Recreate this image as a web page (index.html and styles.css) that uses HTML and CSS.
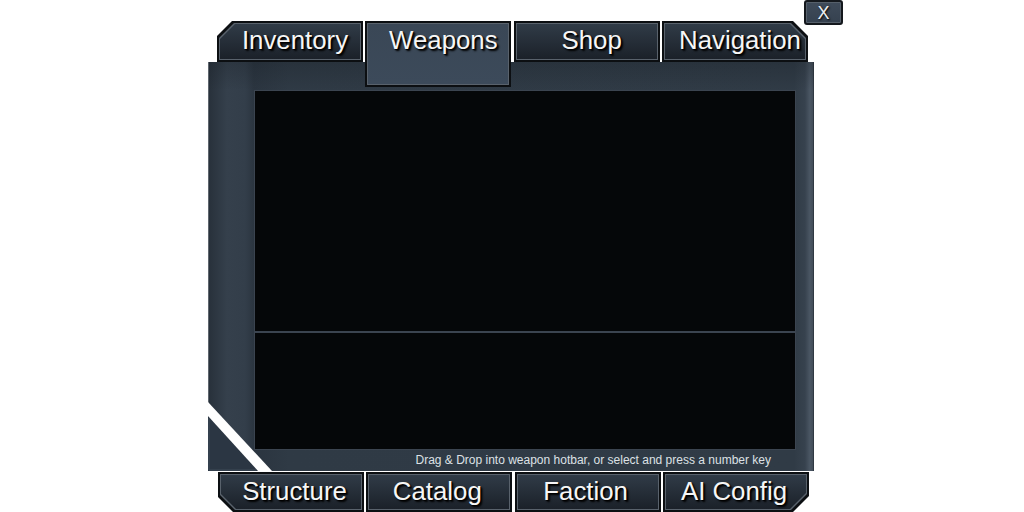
FILE: index.html
```html
<!DOCTYPE html>
<html>
<head>
<meta charset="utf-8">
<link rel="stylesheet" href="styles.css">
</head>
<body>
<div class="window">
  <button class="close"><span>X</span></button>
  <div class="tabs tabs-top">
    <div class="tab cut-tl"><div class="tab-line"><div class="tab-face">Inventory</div></div></div>
    <div class="tab active"><div class="tab-line"><div class="tab-face">Weapons</div></div></div>
    <div class="tab"><div class="tab-line"><div class="tab-face">Shop</div></div></div>
    <div class="tab cut-tr"><div class="tab-line"><div class="tab-face">Navigation</div></div></div>
  </div>
  <div class="panel">
    <div class="screens">
      <div class="screen screen-top"></div>
      <div class="screen screen-bottom"></div>
    </div>
    <div class="status">Drag &amp; Drop into weapon hotbar, or select and press a number key</div>
    <svg class="corner" width="70" height="70" viewBox="0 0 70 70">
      <polygon points="0,15 0,70 50,70" fill="#2b3643"/>
      <polyline points="1,17 1,69 48,69" fill="none" stroke="#3e4a58" stroke-width="1"/>
      <polygon points="0,1 0,15 50,70 64,70" fill="#ffffff"/>
    </svg>
  </div>
  <div class="tabs tabs-bottom">
    <div class="tab cut-bl first"><div class="tab-line"><div class="tab-face">Structure</div></div></div>
    <div class="tab"><div class="tab-line"><div class="tab-face">Catalog</div></div></div>
    <div class="tab"><div class="tab-line"><div class="tab-face">Faction</div></div></div>
    <div class="tab cut-br"><div class="tab-line"><div class="tab-face">AI&nbsp;Config</div></div></div>
  </div>
</div>
</body>
</html>
```
FILE: styles.css
```css
html, body {
  margin: 0;
  padding: 0;
  background: #ffffff;
}
body {
  width: 1024px;
  height: 512px;
  overflow: hidden;
  font-family: "Liberation Sans", Arial, sans-serif;
}
.window {
  position: relative;
  margin-left: 208px;
  width: 606px;
  padding-top: 21px;
}
.close {
  position: absolute;
  left: 596px;
  top: 0;
  width: 39px;
  height: 25px;
  margin: 0;
  padding: 0;
  border: 2px solid #14181d;
  border-radius: 3px;
  background: linear-gradient(#3f4b5a, #35414f);
  box-shadow: inset 0 0 0 1px #56606b;
  color: #eef0f2;
  font-family: "Liberation Sans", Arial, sans-serif;
  font-size: 18px;
  line-height: 20px;
  text-shadow: 1px 1px 2px #000;
  box-sizing: border-box;
}
.tabs {
  display: grid;
  grid-template-columns: repeat(4, 146px);
  column-gap: 2.33px;
  padding-left: 9px;
  align-items: start;
}
.tabs-top {
  height: 41px;
}
.tabs-bottom {
  height: 40px;
  margin-top: 1px;
  padding-left: 10px;
}
.tab {
  height: 41px;
  box-sizing: border-box;
  padding: 2px;
  background: #0c0f12;
}
.tabs-bottom .tab {
  height: 40px;
}
.tab.active {
  position: relative;
  z-index: 2;
  height: 66px;
}
.tab-line {
  height: 100%;
  box-sizing: border-box;
  padding: 1px;
  background: #59626c;
}
.tab-face {
  height: 100%;
  box-sizing: border-box;
  padding-left: 10px;
  background: linear-gradient(#303b47, #1b2129);
  color: #f6f6f6;
  font-size: 25.8px;
  line-height: 32px;
  text-align: center;
  white-space: nowrap;
  text-shadow: 2px 2px 2px #000, 1px 1px 1px #000;
}
.tabs-bottom .tab-face {
  padding-left: 0;
  padding-right: 4px;
}
.tabs-bottom .first .tab-face {
  padding-left: 7px;
  padding-right: 0;
}
.tab.active .tab-face {
  background: linear-gradient(#3a4756, #3c4a5a);
}
.cut-tl, .cut-tl .tab-line, .cut-tl .tab-face {
  clip-path: polygon(15px 0, 100% 0, 100% 100%, 0 100%, 0 15px);
}
.cut-tr, .cut-tr .tab-line, .cut-tr .tab-face {
  clip-path: polygon(0 0, calc(100% - 15px) 0, 100% 15px, 100% 100%, 0 100%);
}
.cut-bl, .cut-bl .tab-line, .cut-bl .tab-face {
  clip-path: polygon(0 0, 100% 0, 100% 100%, 15px 100%, 0 calc(100% - 15px));
}
.cut-br, .cut-br .tab-line, .cut-br .tab-face {
  clip-path: polygon(0 0, 100% 0, 100% calc(100% - 16px), calc(100% - 16px) 100%, 0 100%);
}
.panel {
  position: relative;
  height: 409px;
  box-sizing: border-box;
  padding: 28px 18px 0 45px;
  border-left: 1px solid #5f666e;
  background:
    linear-gradient(to bottom, rgba(20, 26, 32, 0.25), rgba(20, 26, 32, 0) 28px),
    linear-gradient(to right, #28313b 0, #35404c 18px, #333e4a 36px, #2b3540 45px, #2f3a45 80px, #303b46 585px, #37424e 596px, #4b5764 601px, #424d59 604px, #1f252c 605px);
}
.screens {
  display: flex;
  flex-direction: column;
  width: 542px;
}
.screen {
  box-sizing: border-box;
  background: #050709;
  border: 1px solid #3b4450;
}
.screen-top {
  height: 242px;
}
.screen-bottom {
  height: 118px;
}
.status {
  width: 542px;
  box-sizing: border-box;
  height: 21px;
  padding-right: 25px;
  text-align: right;
  font-size: 12px;
  line-height: 20px;
  color: #dde1e5;
  white-space: nowrap;
}
.corner {
  position: absolute;
  left: -1px;
  bottom: 0;
  display: block;
}
```
